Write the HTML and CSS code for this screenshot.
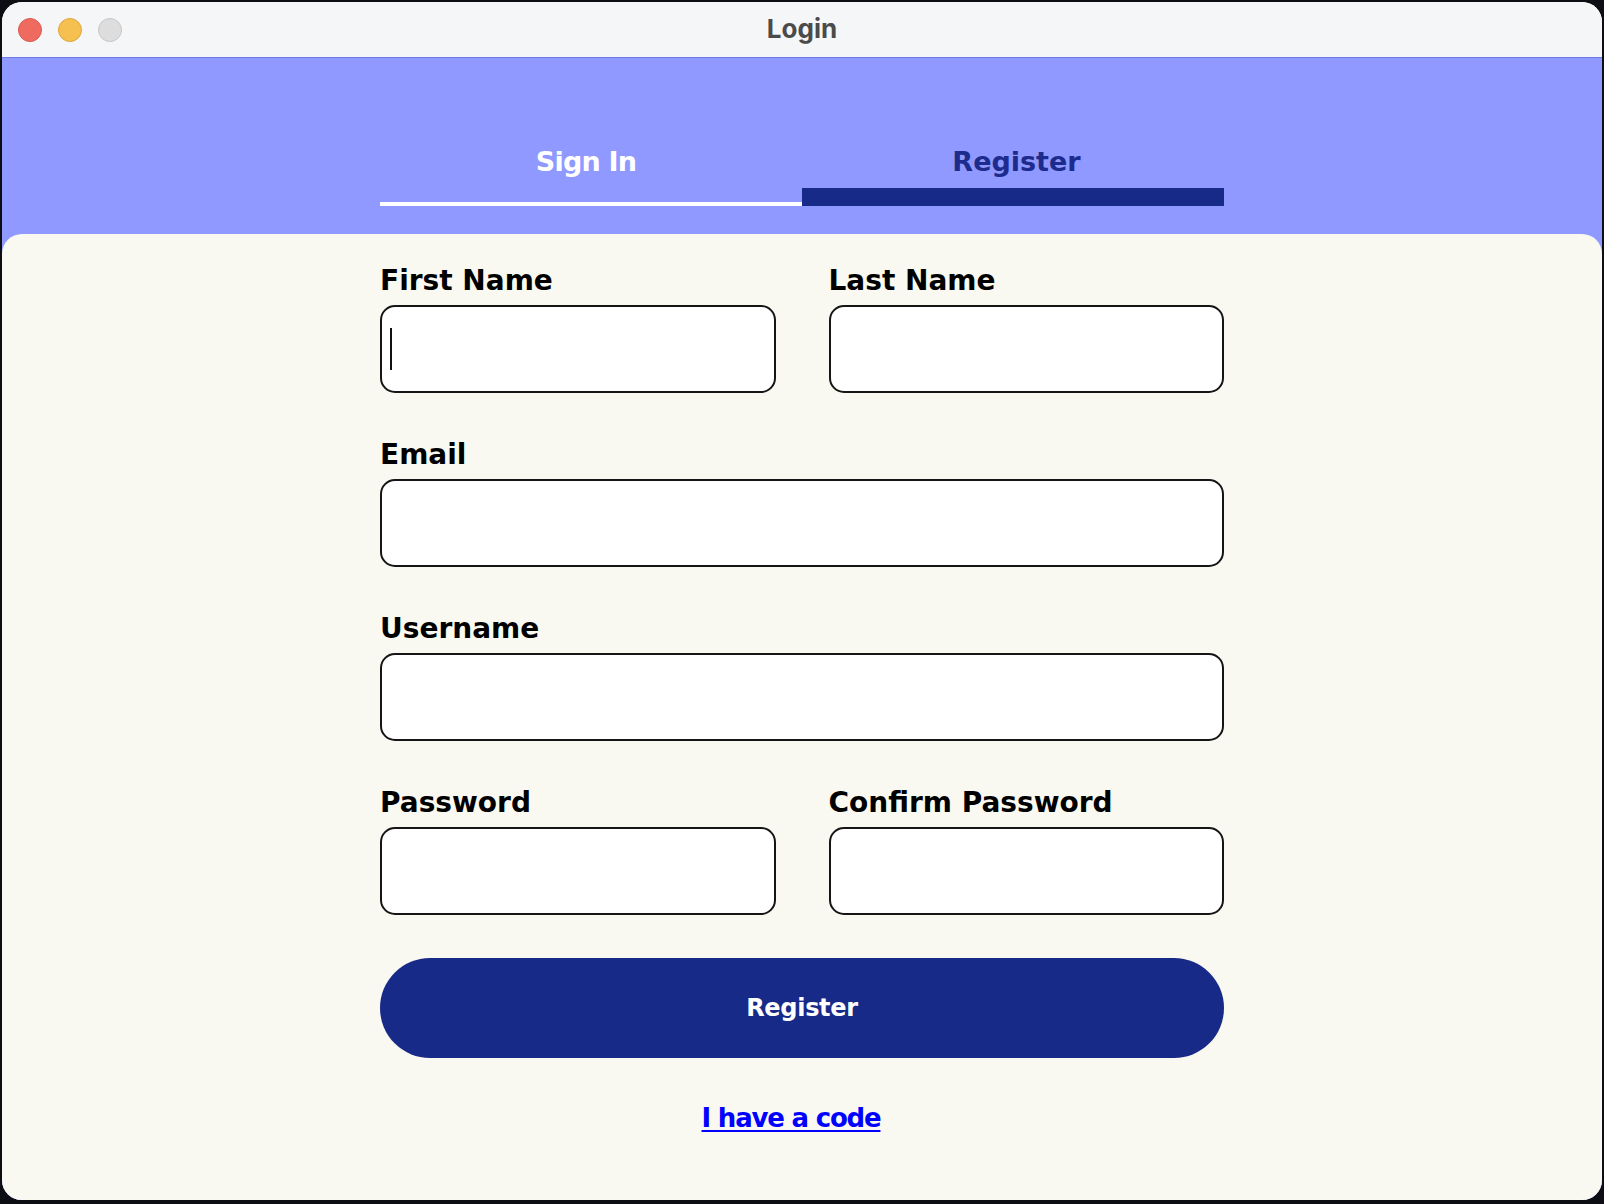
FILE: index.html
```html
<!DOCTYPE html>
<html lang="en">
<head>
<meta charset="utf-8">
<title>Login</title>
<link rel="stylesheet" href="styles.css">
</head>
<body>
<div class="window">
  <div class="titlebar">
    <div class="lights">
      <span class="light red"></span>
      <span class="light yellow"></span>
      <span class="light gray"></span>
    </div>
    <div class="title">Login</div>
    <div></div>
  </div>
  <div class="main">
    <div class="header">
      <div class="tabs">
        <div class="tab">
          <span class="tab-label">Sign In</span>
          <span class="tab-line"></span>
        </div>
        <div class="tab active">
          <span class="tab-label">Register</span>
          <span class="tab-line"></span>
        </div>
      </div>
    </div>
    <div class="card">
      <form class="form">
        <div class="row two">
          <div class="field">
            <label class="label">First Name</label>
            <div class="input-wrap">
              <input class="input" type="text">
              <span class="caret"></span>
            </div>
          </div>
          <div class="field">
            <label class="label">Last Name</label>
            <input class="input" type="text">
          </div>
        </div>
        <div class="row">
          <div class="field">
            <label class="label">Email</label>
            <input class="input" type="text">
          </div>
        </div>
        <div class="row">
          <div class="field">
            <label class="label">Username</label>
            <input class="input" type="text">
          </div>
        </div>
        <div class="row two">
          <div class="field">
            <label class="label">Password</label>
            <input class="input" type="password">
          </div>
          <div class="field">
            <label class="label">Confirm Password</label>
            <input class="input" type="password">
          </div>
        </div>
        <button class="btn" type="button">Register</button>
        <div class="link-row"><a class="link" href="#">I have a code</a></div>
      </form>
    </div>
  </div>
</div>
</body>
</html>
```

FILE: styles.css
```css
html, body {
  margin: 0;
  padding: 0;
}
body {
  background: #0c0e13;
  width: 1604px;
  height: 1204px;
  overflow: hidden;
}
.window {
  margin: 2px;
  width: 1600px;
  height: 1198px;
  border-radius: 20px;
  overflow: hidden;
  display: flex;
  flex-direction: column;
  background: #f9f9f1;
}
.titlebar {
  height: 55px;
  flex: none;
  background: #f5f6f8;
  border-bottom: 1px solid #6f78e4;
  display: grid;
  grid-template-columns: 1fr auto 1fr;
  align-items: center;
}
.lights {
  display: flex;
  gap: 16px;
  padding-left: 16px;
  padding-top: 1px;
}
.light {
  width: 22px;
  height: 22px;
  border-radius: 50%;
  border: 1px solid transparent;
}
.red { background: #ef6b60; border-color: #d95a4f; }
.yellow { background: #f6c050; border-color: #dba63f; }
.gray { background: #dddddd; border-color: #c6c6c6; }
.title {
  font-family: Inter, "Open Sans", sans-serif;
  font-weight: 700;
  font-size: 26px;
  color: #4b4b4b;
  padding-bottom: 2px;
}
.main {
  flex: 1;
  display: flex;
  flex-direction: column;
  background: #8f99ff;
}
.header {
  height: 176px;
  flex: none;
  box-sizing: border-box;
  padding-top: 88px;
}
.tabs {
  width: 844px;
  margin: 0 auto;
  display: grid;
  grid-template-columns: 1fr 1fr;
}
.tab {
  height: 60px;
  display: flex;
  flex-direction: column;
  align-items: center;
}
.tab-label {
  font-family: "DejaVu Sans", sans-serif;
  font-weight: 700;
  font-size: 27px;
  line-height: 32px;
  color: #ffffff;
  letter-spacing: -0.8px;
  padding-right: 10px;
}
.tab.active .tab-label {
  color: #1c2b8c;
  letter-spacing: 0;
  padding-right: 0;
  padding-left: 7px;
}
.tab-line {
  margin-top: auto;
  align-self: stretch;
  height: 4px;
  background: #ffffff;
}
.tab.active .tab-line {
  height: 18px;
  background: #182a87;
}
.card {
  flex: 1;
  background: #f9f9f1;
  border-radius: 20px 20px 0 0;
  padding-top: 31px;
}
.form {
  width: 844px;
  margin: 0 auto;
  display: flex;
  flex-direction: column;
  gap: 46px;
}
.row {
  display: grid;
  grid-template-columns: 1fr;
}
.row.two {
  grid-template-columns: 1fr 1fr;
  column-gap: 53px;
}
.field {
  display: flex;
  flex-direction: column;
}
.label {
  font-family: "DejaVu Sans", sans-serif;
  font-weight: 700;
  font-size: 28px;
  line-height: 32px;
  color: #000;
  margin-bottom: 8px;
}
.input-wrap {
  position: relative;
  display: flex;
  flex-direction: column;
}
.input {
  box-sizing: border-box;
  height: 88px;
  width: 100%;
  margin: 0;
  border: 2px solid #151515;
  border-radius: 15px;
  background: #fff;
  outline: none;
  font-family: "DejaVu Sans", sans-serif;
  font-size: 24px;
  padding: 0 10px;
}
.caret {
  position: absolute;
  left: 10px;
  top: 23px;
  width: 2px;
  height: 42px;
  background: #111;
}
.btn {
  margin-top: -3px;
  height: 100px;
  width: 100%;
  border: none;
  border-radius: 50px;
  background: #182a88;
  color: #fff;
  font-family: "DejaVu Sans", sans-serif;
  font-weight: 700;
  font-size: 24px;
  letter-spacing: -0.3px;
  padding: 0 0 0 0;
  line-height: 100px;
}
.link-row {
  margin-top: -2px;
  text-align: center;
  line-height: 32px;
  padding-right: 22px;
}
.link {
  font-family: "DejaVu Sans", sans-serif;
  font-weight: 700;
  font-size: 26px;
  letter-spacing: -1.2px;
  color: #0000ff;
  text-decoration: underline;
  text-decoration-thickness: 2px;
  text-underline-offset: 3px;
}
```
